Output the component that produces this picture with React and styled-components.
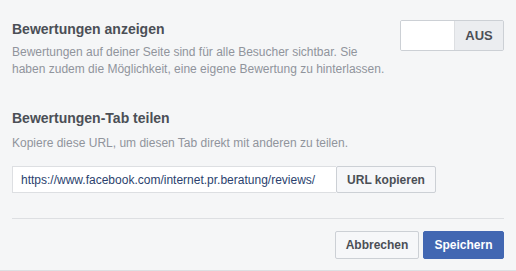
import React from 'react';
import styled, { createGlobalStyle } from 'styled-components';

const GlobalStyle = createGlobalStyle`
  html, body {
    margin: 0;
    padding: 0;
    background: #f5f6f7;
  }
  body {
    font-family: "Liberation Sans", Arial, Helvetica, sans-serif;
  }
`;

const Panel = styled.div`
  box-sizing: border-box;
  width: 516px;
  height: 271px;
  padding: 20px 12px 0 12px;
  background: #f5f6f7;
  border-bottom: 1px solid #dddfe2;
`;

const Row = styled.div`
  display: flex;
  justify-content: space-between;
  align-items: flex-start;
`;

const Title = styled.div`
  font-size: 14px;
  line-height: 18px;
  font-weight: bold;
  color: #4b4f56;
`;

const Desc = styled.div`
  margin-top: ${(p) => p.$gap || 6}px;
  font-size: 12px;
  line-height: 17px;
  color: #90949c;
`;

const Toggle = styled.div`
  display: flex;
  height: 31px;
  box-sizing: border-box;
  border: 1px solid #ccd0d5;
  border-radius: 2px;
  overflow: hidden;
`;

const ToggleOff = styled.div`
  width: 53px;
  background: #fff;
  border-right: 1px solid #dddfe2;
`;

const ToggleLabel = styled.div`
  width: 48px;
  display: flex;
  align-items: center;
  justify-content: center;
  background: #ebedf0;
  font-size: 13px;
  font-weight: bold;
  color: #4b4f56;
`;

const Section = styled.div`
  margin-top: ${(p) => p.$top}px;
`;

const UrlRow = styled.div`
  display: flex;
  margin-top: 14px;
`;

const UrlInput = styled.input`
  box-sizing: border-box;
  width: 324px;
  height: 27px;
  margin: 0;
  padding: 0 8px;
  border: 1px solid #dddfe2;
  border-right: none;
  background: #fff;
  font-family: inherit;
  font-size: 12px;
  color: #2b3f6e;
  outline: none;
`;

const Button = styled.button`
  box-sizing: border-box;
  height: ${(p) => p.$h || 28}px;
  width: ${(p) => p.$w}px;
  margin: 0;
  padding: 0;
  border: 1px solid ${(p) => (p.$primary ? '#4267b2' : '#ccd0d5')};
  border-radius: 2px;
  background: ${(p) => (p.$primary ? '#4267b2' : '#f6f7f9')};
  color: ${(p) => (p.$primary ? '#fff' : '#4b4f56')};
  font-family: inherit;
  font-size: 12px;
  font-weight: bold;
  cursor: pointer;
`;

const Divider = styled.div`
  margin-top: 25px;
  height: 1px;
  background: #dddfe2;
`;

const Footer = styled.div`
  display: flex;
  justify-content: flex-end;
  gap: 4px;
  margin-top: 12px;
`;

export default function App() {
  return (
    <>
      <GlobalStyle />
      <Panel>
        <Row>
          <div>
            <Title>Bewertungen anzeigen</Title>
            <Desc>
              Bewertungen auf deiner Seite sind für alle Besucher sichtbar. Sie
              <br />
              haben zudem die Möglichkeit, eine eigene Bewertung zu hinterlassen.
            </Desc>
          </div>
          <Toggle>
            <ToggleOff />
            <ToggleLabel>AUS</ToggleLabel>
          </Toggle>
        </Row>

        <Section $top={31}>
          <Title>Bewertungen-Tab teilen</Title>
          <Desc $gap={8}>Kopiere diese URL, um diesen Tab direkt mit anderen zu teilen.</Desc>
          <UrlRow>
            <UrlInput readOnly value="https://www.facebook.com/internet.pr.beratung/reviews/" />
            <Button $w={100} $h={27}>URL kopieren</Button>
          </UrlRow>
        </Section>

        <Divider />

        <Footer>
          <Button $w={84}>Abbrechen</Button>
          <Button $w={81} $primary>Speichern</Button>
        </Footer>
      </Panel>
    </>
  );
}
